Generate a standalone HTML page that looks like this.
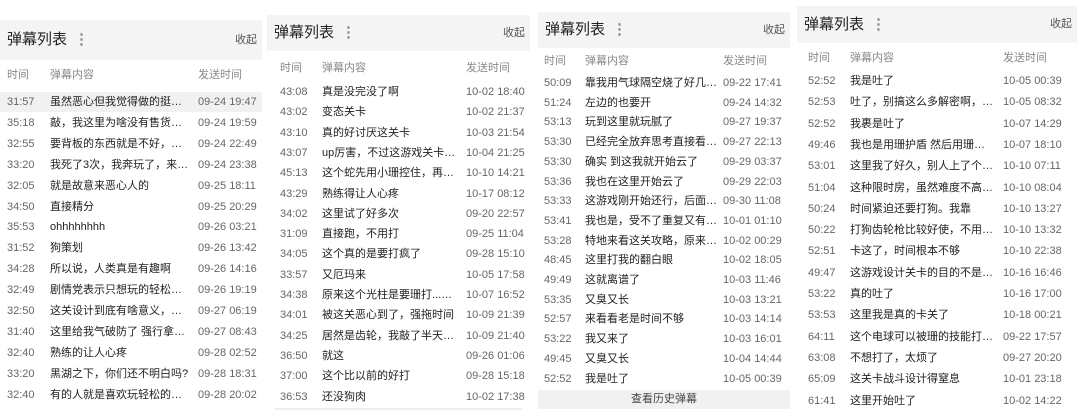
<!DOCTYPE html><html><head><meta charset="utf-8"><style>
body{margin:0;width:1080px;height:414px;background:#fff;position:relative;overflow:hidden;font-family:"Liberation Sans","Noto Sans CJK SC",sans-serif;}
.p{position:absolute;}
.h{position:absolute;left:0;right:0;background:#f4f4f4;}
.h .t{position:absolute;left:7px;font-size:15px;color:#222;}
.h .d{position:absolute;font-size:15px;color:#888;font-weight:bold;}
.h .c{position:absolute;right:5px;font-size:11px;color:#555;}
.r{position:absolute;left:0;right:0;height:20px;font-size:11px;line-height:20px;color:#222;}
.r span{position:absolute;white-space:nowrap;overflow:hidden;}
.r .b{text-overflow:ellipsis;}
.r .a{color:#666}.r .z{color:#666}
.ch{color:#888}
</style></head><body>
<div id="root"></div>
<script>
const P=[
{x:0,w:262,hy:20,hh:40,cy:65,ry:92,pitch:20.9,tx:7,cx:50,dx:198,hl:0,rows:[
["31:57","虽然恶心但我觉得做的挺好…","09-24 19:47"],["35:18","敲，我这里为啥没有售货机…","09-24 19:59"],["32:55","要背板的东西就是不好，这…","09-24 22:49"],["33:20","我死了3次，我奔玩了，来…","09-24 23:38"],["32:05","就是故意来恶心人的","09-25 18:11"],["34:50","直接精分","09-25 20:29"],["35:53","ohhhhhhhh","09-26 03:21"],["31:52","狗策划","09-26 13:42"],["34:28","所以说，人类真是有趣啊","09-26 14:16"],["32:49","剧情党表示只想玩的轻松，…","09-26 19:19"],["32:50","这关设计到底有啥意义，专…","09-27 06:19"],["31:40","这里给我气破防了 强行拿…","09-27 08:43"],["32:40","熟练的让人心疼","09-28 02:52"],["33:20","黑湖之下，你们还不明白吗?","09-28 18:31"],["32:40","有的人就是喜欢玩轻松的游…","09-28 20:02"]]},
{x:267,w:263,hy:15,hh:36,cy:58,ry:82,pitch:20.3,tx:13,cx:55,dx:199,line:408,rows:[
["43:08","真是没完没了啊","10-02 18:40"],["43:02","变态关卡","10-02 21:37"],["43:10","真的好讨厌这关卡","10-03 21:54"],["43:07","up厉害，不过这游戏关卡有…","10-04 21:25"],["45:13","这个蛇先用小珊控住，再换…","10-10 14:21"],["43:29","熟练得让人心疼","10-17 08:12"],["34:02","这里试了好多次","09-20 22:57"],["31:09","直接跑，不用打","09-25 11:04"],["34:05","这个真的是要打疯了","09-28 15:10"],["33:57","又厄玛来","10-05 17:58"],["34:38","原来这个光柱是要珊打...我…","10-07 16:52"],["34:01","被这关恶心到了，强拖时间","10-09 21:39"],["34:25","居然是齿轮，我敲了半天炸弹","10-09 21:40"],["36:50","就这","09-26 01:06"],["37:00","这个比以前的好打","09-28 15:18"],["36:53","还没狗肉","10-02 17:38"]]},
{x:538,w:252,hy:12,hh:36,cy:51,ry:73,pitch:19.7,tx:6,cx:47,dx:185,btn:1,rows:[
["50:09","靠我用气球隔空烧了好几次…","09-22 17:41"],["51:24","左边的也要开","09-24 14:32"],["53:13","玩到这里就玩腻了","09-27 19:37"],["53:30","已经完全放弃思考直接看攻…","09-27 22:13"],["53:30","确实 到这我就开始云了","09-29 03:37"],["53:36","我也在这里开始云了","09-29 22:03"],["53:33","这游戏刚开始还行，后面一…","09-30 11:08"],["53:41","我也是，受不了重复又有点…","10-01 01:10"],["53:28","特地来看这关攻略，原来是…","10-02 00:29"],["48:45","这里打我的翻白眼","10-02 18:05"],["49:49","这就离谱了","10-03 11:46"],["53:35","又臭又长","10-03 13:21"],["52:57","来看看老是时间不够","10-03 14:14"],["53:22","我又来了","10-03 16:01"],["49:45","又臭又长","10-04 14:44"],["52:52","我是吐了","10-05 00:39"]]},
{x:797,w:280,hy:6,hh:37,cy:48,ry:71,pitch:21.3,tx:11,cx:53,dx:206,rows:[
["52:52","我是吐了","10-05 00:39"],["52:53","吐了，别搞这么多解密啊，…","10-05 08:32"],["52:52","我裹是吐了","10-07 14:29"],["49:46","我也是用珊护盾 然后用珊…","10-07 18:10"],["53:01","这里我了好久，别人上了个…","10-10 07:11"],["51:04","这种限时房，虽然难度不高…","10-10 08:04"],["50:24","时间紧迫还要打狗。我靠","10-10 13:27"],["50:22","打狗齿轮枪比较好使，不用…","10-10 13:32"],["52:51","卡这了，时间根本不够","10-10 22:38"],["49:47","这游戏设计关卡的目的不是…","10-16 16:46"],["53:22","真的吐了","10-16 17:00"],["53:53","这里我是真的卡关了","10-18 00:21"],["64:11","这个电球可以被珊的技能打…","09-22 17:57"],["63:08","不想打了，太烦了","09-27 20:20"],["65:09","这关卡战斗设计得窒息","10-01 23:18"],["61:41","这里开始吐了","10-02 14:22"]]}];
let h='';
P.forEach(p=>{
h+=`<div class="p" style="left:${p.x}px;top:0;width:${p.w}px;height:414px">`;
h+=`<div class="h" style="top:${p.hy}px;height:${p.hh}px;line-height:${p.hh}px"><span class="t">弹幕列表</span><span class="d" style="left:74px">⋮</span><span class="c">收起</span></div>`;
h+=`<div class="r ch" style="top:${p.cy}px"><span style="left:${p.tx}px">时间</span><span style="left:${p.cx}px">弹幕内容</span><span style="left:${p.dx}px">发送时间</span></div>`;
const cw=p.dx-p.cx-6;
p.rows.forEach((r,i)=>{const y=p.ry+i*p.pitch;
h+=`<div class="r" style="top:${y}px;${p.hl===0&&i===0?'background:#f1f1f1;':''}"><span class="a" style="left:${p.tx}px">${r[0]}</span><span class="b" style="left:${p.cx}px;max-width:${cw}px">${r[1]}</span><span class="z" style="left:${p.dx}px">${r[2]}</span></div>`;});
if(p.btn)h+=`<div style="position:absolute;left:0;right:0;top:390px;height:19px;background:#f1f1f1;text-align:center;font-size:11px;line-height:19px;color:#444">查看历史弹幕</div>`;
if(p.line)h+=`<div style="position:absolute;left:8px;right:8px;top:${p.line}px;height:2px;background:#eee"></div>`;
h+='</div>';});
document.getElementById('root').innerHTML=h;
</script>
</body></html>
